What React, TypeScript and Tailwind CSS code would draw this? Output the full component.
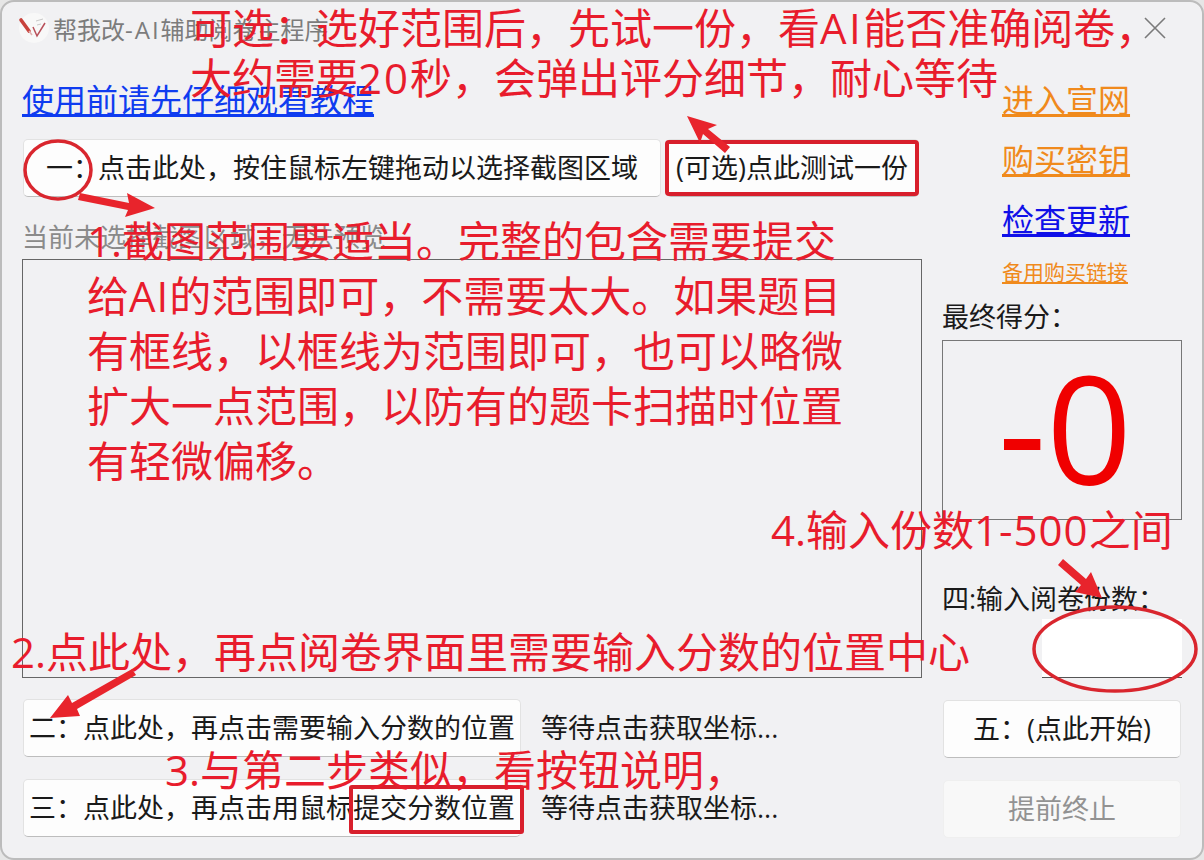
import React from "react";

const btn =
  "flex items-center h-[58px] pt-px bg-[#fdfdfd] border border-[#e2e2e2] border-b-[#bdbdbd] rounded-[5px] text-[27px] text-[#1a1a1a] whitespace-nowrap";

const note =
  "absolute text-[42px] leading-[55px] text-[#e81c2c] whitespace-nowrap";

function Arrow({ points }: { points: string }) {
  return <polygon points={points} fill="#e8242c" />;
}

function Overlay() {
  return (
    <svg className="absolute inset-0" width="1204" height="860" fill="none">
      <ellipse cx="58" cy="170" rx="33" ry="29" stroke="#d9262e" strokeWidth="3.5" />
      <ellipse cx="1115" cy="649" rx="81" ry="42" stroke="#d9262e" strokeWidth="3.5" />
      <rect x="667" y="142" width="250" height="52" rx="2" stroke="#d81f2c" strokeWidth="4" />
      <rect x="351" y="787" width="171" height="45" rx="1" stroke="#d81f2c" strokeWidth="4" />
      <Arrow points="80,193 129,203 127,193 155,208 125,217 128,210 78,200" />
      <Arrow points="687,116 717,125 708,129 730,147 725,153 703,134 700,143" />
      <Arrow points="50,718 68,695 72,703 132,669 136,675 77,709 80,716" />
      <Arrow points="1102,598 1075,592 1081,585 1058,565 1063,559 1086,579 1091,572" />
    </svg>
  );
}

function Logo() {
  return (
    <svg width="32" height="32" viewBox="0 0 32 32" fill="none" className="mr-[3px]">
      <circle cx="16" cy="16" r="15" fill="#f8f8f8" />
      <path d="M3 8 L11 19" stroke="#c8423c" strokeWidth="3.6" strokeLinecap="round" />
      <path d="M11 19 L14 23" stroke="#e0b0b0" strokeWidth="1.5" />
      <path d="M15 15 L19 24 L27 11" stroke="#b8505a" strokeWidth="1.5" />
      <path d="M18 9 L25 7 M19 13 L23 12" stroke="#c8c8c8" strokeWidth="1" />
    </svg>
  );
}

export default function App() {
  return (
    <div className="relative w-[1204px] h-[860px] overflow-hidden bg-[#e6e6e6] font-['Open_Sans','Noto_Sans_CJK_SC',sans-serif]">
      <div className="w-full h-full flex flex-col bg-[#f1f1f3] border-2 border-[#bcbcbc] rounded-[14px] box-border">
        {/* title bar */}
        <div className="flex items-center h-[52px] pl-[16px] pr-[36px] shrink-0 mb-[2px]">
          <Logo />
          <span className="text-[24px] text-[#7c7c7c] whitespace-nowrap pt-[3px]">
            帮我改<span className="tracking-[2px]">-AI</span>辅助阅卷主程序
          </span>
          <svg width="22" height="22" viewBox="0 0 22 22" className="ml-auto" stroke="#7a7a7a" strokeWidth="1.6">
            <path d="M1 1 L21 21 M21 1 L1 21" />
          </svg>
        </div>

        <div className="flex">
          {/* left column */}
          <div className="w-[900px] ml-[20px] shrink-0 flex flex-col">
            <div className="h-[40px] mt-[24px] flex items-center">
              <span className="text-[32px] text-[#0f3cf0] underline whitespace-nowrap">使用前请先仔细观看教程</span>
            </div>
            <div className="flex mt-[19px] gap-[5px]">
              <div className={`${btn} w-[638px] ml-[1px] pl-[22px]`}>
                <span className="w-[52px] shrink-0">一：</span>
                <span>点击此处，按住鼠标左键拖动以选择截图区域</span>
              </div>
              <div className={`${btn} w-[253px] pl-[9px]`}>(可选)点此测试一份</div>
            </div>
            <div className="h-[30px] mt-[25px] flex items-center text-[26px] text-[#8a8a8a] whitespace-nowrap">
              当前未选择截图区域，无法预览
            </div>
            <div className="h-[419px] mt-[7px] border border-[#666]" />
            <div className="flex items-center mt-[21px]">
              <div className={`${btn} w-[498px] ml-[1px] pl-[5px]`}>二：点此处，再点击需要输入分数的位置</div>
              <span className="ml-[20px] text-[27px] text-[#1a1a1a] whitespace-nowrap">等待点击获取坐标...</span>
            </div>
            <div className="flex items-center mt-[22px]">
              <div className={`${btn} w-[498px] ml-[1px] pl-[5px]`}>三：点此处，再点击用鼠标提交分数位置</div>
              <span className="ml-[20px] text-[27px] text-[#1a1a1a] whitespace-nowrap">等待点击获取坐标...</span>
            </div>
          </div>

          {/* right column */}
          <div className="w-[240px] ml-[20px] shrink-0 flex flex-col">
            <div className="pl-[60px] flex flex-col whitespace-nowrap">
              <span className="h-[44px] mt-[22px] text-[32px] leading-[44px] text-[#f08a1c] underline">进入宣网</span>
              <span className="h-[44px] mt-[16px] text-[32px] leading-[44px] text-[#f08a1c] underline">购买密钥</span>
              <span className="h-[44px] mt-[16px] text-[32px] leading-[44px] text-[#1010e8] underline">检查更新</span>
              <span className="h-[30px] mt-[15px] text-[21px] leading-[30px] text-[#f08a1c] underline">备用购买链接</span>
            </div>
            <div className="mt-[12px] h-[36px] text-[27px] leading-[36px] text-[#1a1a1a] whitespace-nowrap">最终得分：</div>
            <div className="mt-[5px] h-[180px] border border-[#777] flex items-center justify-center pb-[6px] pl-[6px]">
              <span className="text-[150px] leading-none text-[#f00000] font-['Open_Sans',sans-serif]">-0</span>
            </div>
            <div className="mt-[61px] h-[36px] text-[27px] leading-[36px] text-[#1a1a1a] whitespace-nowrap">四:输入阅卷份数：</div>
            <div className="mt-[2px] ml-[100px] h-[59px] bg-white border-b border-[#555]" />
            <div className={`${btn} mt-[22px] ml-[1px] w-[238px] justify-center`}>五：(点此开始)</div>
            <div className="flex items-center justify-center h-[58px] mt-[22px] ml-[1px] w-[238px] bg-[#f8f8f8] border border-[#efefef] rounded-[5px] text-[27px] text-[#929292]">
              提前终止
            </div>
          </div>
        </div>
      </div>

      {/* red annotations drawn over the screenshot */}
      <Overlay />
      <div className={`${note} left-[190px] top-[0px]`}>
        可选：选好范围后，先试一份，看<span className="tracking-[2.5px]">AI</span>能否准确阅卷，
      </div>
      <div className={`${note} left-[190px] top-[50px]`}>
        大约需要<span className="tracking-[2px]">20</span>秒，会弹出评分细节，耐心等待
      </div>
      <div className={`${note} left-[87px] top-[213px]`}>
        <div>1.截图范围要适当。完整的包含需要提交</div>
        <div>给<span className="tracking-[1px]">AI</span>的范围即可，不需要太大。如果题目</div>
        <div>有框线，以框线为范围即可，也可以略微</div>
        <div>扩大一点范围，以防有的题卡扫描时位置</div>
        <div>有轻微偏移。</div>
      </div>
      <div className={`${note} left-[11px] top-[624px]`}>2.点此处，再点阅卷界面里需要输入分数的位置中心</div>
      <div className={`${note} left-[165px] top-[742px]`}>3.与第二步类似，看按钮说明，</div>
      <div className={`${note} left-[771px] top-[502px]`}>
        4.输入份数<span className="tracking-[1px]">1-500</span>之间
      </div>
    </div>
  );
}
